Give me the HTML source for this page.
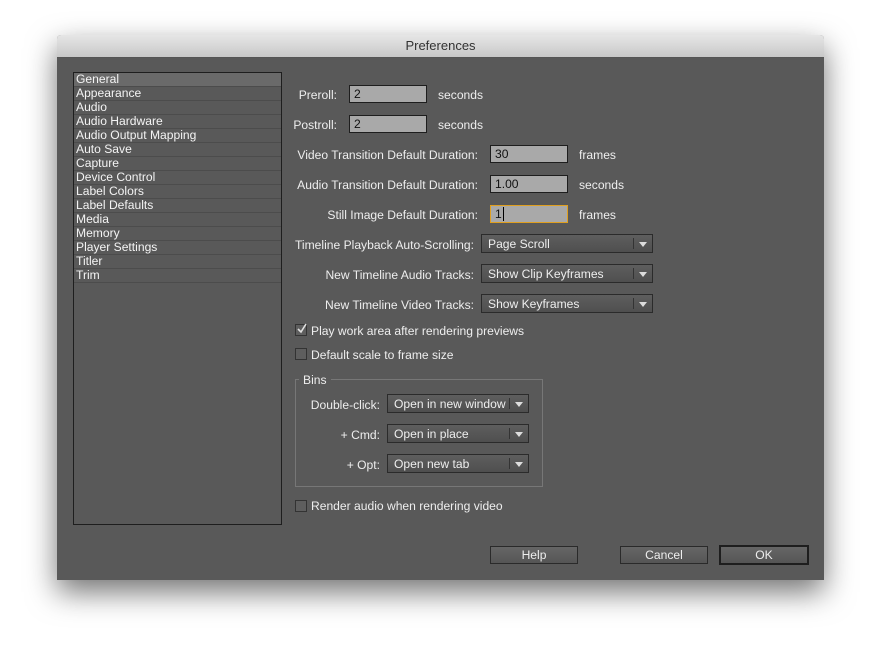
<!DOCTYPE html>
<html><head><style>
body{margin:0;width:881px;height:659px;background:#fff;position:relative;font-family:"Liberation Sans",sans-serif;font-size:12.1px;color:#eeeeee;overflow:hidden}
.win{position:absolute;left:57px;top:35px;width:767px;height:545px;background:#595959;box-shadow:0 12px 30px rgba(0,0,0,.55);border-radius:4px 4px 0 0;overflow:hidden}
.title{position:absolute;left:0;top:0;width:767px;height:22px;background:linear-gradient(#e6e6e6,#c8c8c8);border-bottom:1px solid #555;color:#333;font-size:13px;text-align:center;line-height:22px}
.a{position:absolute;white-space:nowrap}
.list{position:absolute;left:16px;top:37px;width:207px;height:451px;border:1px solid #1e1e1e;background:#595959}
.li{height:13px;line-height:13px;border-bottom:1px solid #4c4c4c;padding-left:2px;color:#f4f4f4}
.li.sel{background:#6a6a6a}
.in{position:absolute;height:18px;background:#a9a9a9;border:1px solid #1e1e1e;color:#111;line-height:16px;padding-left:4px;box-sizing:border-box}
.dd{position:absolute;height:19px;background:linear-gradient(#5e5e5e,#4f4f4f);border:1px solid #2b2b2b;box-sizing:border-box;line-height:18px;padding-left:6px;color:#eee}
.dd:after{content:"";position:absolute;right:5px;top:7px;border-left:4px solid transparent;border-right:4px solid transparent;border-top:5px solid #ddd}
.dd:before{content:"";position:absolute;right:18px;top:3px;height:11px;border-left:1px solid #333}
.r{text-align:right}
.cb{position:absolute;width:10px;height:10px;border:1px solid #333;background:#5e5e5e}
.btn{position:absolute;height:18px;width:88px;border:1px solid #2a2a2a;background:linear-gradient(#666,#555);box-sizing:border-box;text-align:center;line-height:17px;color:#eee}
</style></head><body>
<div class="win">
<div class="title">Preferences</div>
<div class="list">
<div class="li sel">General</div><div class="li">Appearance</div><div class="li">Audio</div><div class="li">Audio Hardware</div><div class="li">Audio Output Mapping</div><div class="li">Auto Save</div><div class="li">Capture</div><div class="li">Device Control</div><div class="li">Label Colors</div><div class="li">Label Defaults</div><div class="li">Media</div><div class="li">Memory</div><div class="li">Player Settings</div><div class="li">Titler</div><div class="li">Trim</div>
</div>

<div class="a r" style="right:487px;top:53px">Preroll:</div>
<div class="in" style="left:292px;top:50px;width:78px">2</div>
<div class="a" style="left:381px;top:53px">seconds</div>
<div class="a r" style="right:487px;top:83px">Postroll:</div>
<div class="in" style="left:292px;top:80px;width:78px">2</div>
<div class="a" style="left:381px;top:83px">seconds</div>

<div class="a r" style="right:346px;top:113px">Video Transition Default Duration:</div>
<div class="in" style="left:433px;top:110px;width:78px">30</div>
<div class="a" style="left:522px;top:113px">frames</div>
<div class="a r" style="right:346px;top:143px">Audio Transition Default Duration:</div>
<div class="in" style="left:433px;top:140px;width:78px">1.00</div>
<div class="a" style="left:522px;top:143px">seconds</div>
<div class="a r" style="right:346px;top:173px">Still Image Default Duration:</div>
<div class="in" style="left:433px;top:170px;width:78px;border-color:#e0a020">1<span style="border-left:1px solid #000;margin-left:1px"></span></div>
<div class="a" style="left:522px;top:173px">frames</div>

<div class="a r" style="right:350px;top:203px">Timeline Playback Auto-Scrolling:</div>
<div class="dd" style="left:424px;top:199px;width:172px">Page Scroll</div>
<div class="a r" style="right:350px;top:233px">New Timeline Audio Tracks:</div>
<div class="dd" style="left:424px;top:229px;width:172px">Show Clip Keyframes</div>
<div class="a r" style="right:350px;top:263px">New Timeline Video Tracks:</div>
<div class="dd" style="left:424px;top:259px;width:172px">Show Keyframes</div>

<div class="cb" style="left:238px;top:289px"></div>
<svg class="a" style="left:239px;top:288px" width="12" height="12"><path d="M2 6 L5 9 L10 1" stroke="#e0e0e0" stroke-width="1.6" fill="none"/></svg>
<div class="a" style="left:254px;top:289px">Play work area after rendering previews</div>
<div class="cb" style="left:238px;top:313px"></div>
<div class="a" style="left:254px;top:313px">Default scale to frame size</div>

<div class="a" style="left:238px;top:344px;width:248px;height:108px;border:1px solid #777;box-sizing:border-box"></div>
<div class="a" style="left:242px;top:338px;background:#595959;padding:0 4px">Bins</div>
<div class="a r" style="right:444px;top:363px">Double-click:</div>
<div class="dd" style="left:330px;top:359px;width:142px">Open in new window</div>
<div class="a r" style="right:444px;top:393px">+ Cmd:</div>
<div class="dd" style="left:330px;top:389px;width:142px">Open in place</div>
<div class="a r" style="right:444px;top:423px">+ Opt:</div>
<div class="dd" style="left:330px;top:419px;width:142px">Open new tab</div>

<div class="cb" style="left:238px;top:465px"></div>
<div class="a" style="left:254px;top:464px">Render audio when rendering video</div>

<div class="btn" style="left:433px;top:511px">Help</div>
<div class="btn" style="left:563px;top:511px">Cancel</div>
<div class="btn" style="left:662px;top:510px;width:90px;height:20px;border:2px solid #1e1e1e">OK</div>
</div>
</body></html>
